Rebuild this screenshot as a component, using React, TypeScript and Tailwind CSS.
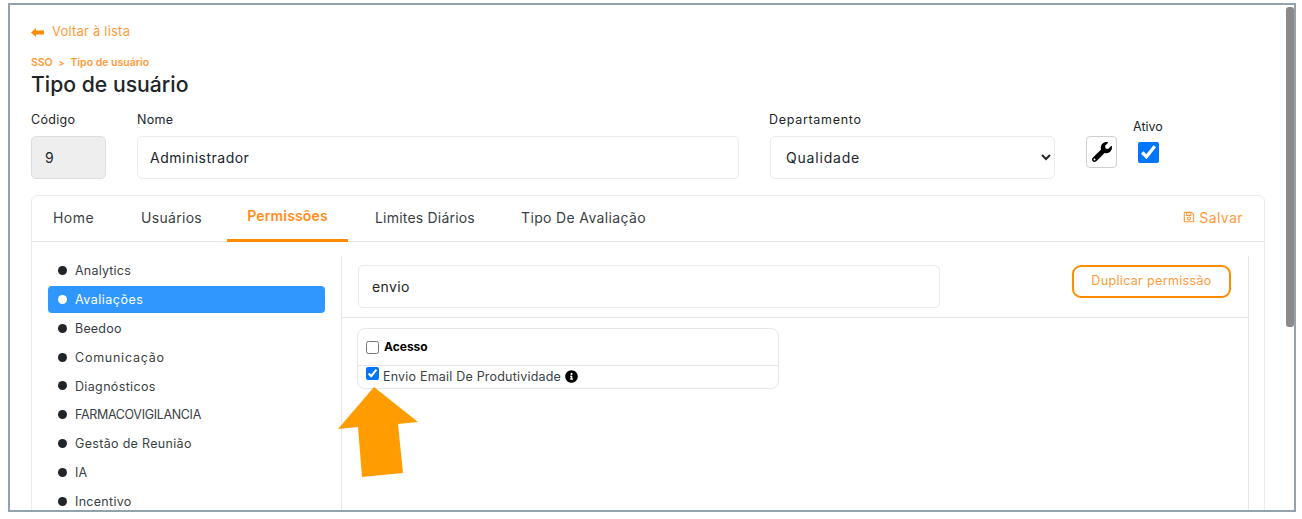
import { FaWrench, FaRegSave, FaInfoCircle } from "react-icons/fa";

const menu: [string, string][] = [
  ["Analytics", "tracking-[0.2px]"],
  ["Avaliações", "tracking-[0.5px]"],
  ["Beedoo", "tracking-[0.2px]"],
  ["Comunicação", "tracking-[0.75px]"],
  ["Diagnósticos", "tracking-[0.35px]"],
  ["FARMACOVIGILANCIA", "tracking-[-0.33px]"],
  ["Gestão de Reunião", "tracking-[0.32px]"],
  ["IA", "tracking-[0.2px]"],
  ["Incentivo", "tracking-[0.3px]"],
];
const tabs = ["Home", "Usuários", "Permissões", "Limites Diários", "Tipo De Avaliação"];

export default function App() {
  return (
    <div className="w-[1302px] h-[519px] bg-white pt-[3px] pl-[8px] overflow-hidden font-['Inter','Liberation_Sans',sans-serif] text-[#212529]">
      <div className="relative w-[1288px] h-[509px] border-2 border-[#93a3ad] overflow-hidden bg-white pl-[21px] pr-[29px]">
        <a className="flex items-center gap-[8px] h-[20px] mt-[17px] text-[13px] tracking-[0.2px] text-[#ff9a3c]">
          <svg width="13" height="9" viewBox="0 0 13 9" className="shrink-0">
            <polygon points="0,4.5 5,0 5,2.5 13,2.5 13,6.5 5,6.5 5,9" fill="#ff8c00" />
          </svg>
          <span>Voltar à lista</span>
        </a>
        <div className="flex items-center gap-[6px] mt-[14px] h-[14px] text-[10.5px] font-semibold tracking-[-0.1px] text-[#ff9a3c]">
          <span>SSO</span>
          <span className="text-[9px]">&gt;</span>
          <span className="tracking-[0px]">Tipo de usuário</span>
        </div>
        <h1 className="text-[21.2px] leading-[30px] font-medium mt-[-1px] text-[#212529]">Tipo de usuário</h1>

        <div className="flex items-start mt-[12px] h-[69px]">
          <div className="w-[75px] mr-[31px]">
            <label className="block h-[17px] leading-[17px] text-[12.5px] tracking-[0.3px]">Código</label>
            <div className="mt-[8px] h-[43px] rounded-[5px] border border-[#dedede] bg-[#eeeeee] pl-[13px] flex items-center text-[14px]">9</div>
          </div>
          <div className="w-[602px] mr-[31px]">
            <label className="block h-[17px] leading-[17px] text-[12.5px] tracking-[0.3px]">Nome</label>
            <input
              readOnly
              value="Administrador"
              className="mt-[8px] w-full h-[43px] rounded-[5px] border border-[#ebebeb] bg-white pl-[12px] text-[14px] tracking-[0.5px] outline-none"
            />
          </div>
          <div className="w-[285px] mr-[31px]">
            <label className="block h-[17px] leading-[17px] text-[12.5px] tracking-[0.7px] -ml-[1px]">Departamento</label>
            <select className="mt-[8px] w-full h-[43px] rounded-[5px] border border-[#ebebeb] bg-white pl-[11px] pr-[8px] text-[14px] tracking-[0.8px] outline-none">
              <option>Qualidade</option>
            </select>
          </div>
          <button className="mt-[25px] w-[31px] h-[32px] mr-[16px] rounded-[4px] border border-[#cfcfcf] bg-white flex items-center justify-center">
            <FaWrench className="w-[20px] h-[20px] text-black" />
          </button>
          <div className="flex flex-col items-center mt-[7px]">
            <label className="h-[17px] leading-[17px] text-[12.5px]">Ativo</label>
            <input type="checkbox" defaultChecked className="mt-[7px] ml-[2px] w-[21px] h-[21px]" />
          </div>
        </div>

        <div className="mt-[15px] w-[1234px] h-[340px] rounded-t-[6px] border border-[#ebebeb] bg-white">
          <div className="flex items-stretch h-[46px] border-b border-[#e6e6e6] pl-[1px] pr-[21px] text-[14px] tracking-[0.3px]">
            <div className="flex">
              {tabs.map((t) =>
                t === "Permissões" ? (
                  <div key={t} className="w-[121px] mr-[6px] flex items-center justify-center pb-[5px] border-b-[3px] border-[#ff8c00] font-semibold tracking-[0.15px] text-[#ff8c1a] h-[46px]">
                    {t}
                  </div>
                ) : (
                  <div
                    key={t}
                    className={`flex items-center pb-[3px] text-[#3a3f44] ${t === "Home" ? "pl-[20px] w-[87px] tracking-[0.45px]" : t === "Usuários" ? "pl-[21px] w-[107px]" : t === "Limites Diários" ? "pl-[21px] w-[146px] tracking-[0.2px]" : "pl-[21px] tracking-[0.35px]"}`}
                  >
                    {t}
                  </div>
                )
              )}
            </div>
            <div className="ml-auto flex items-center gap-[4px] pb-[3px] text-[#ff9a3c] tracking-[0.4px]">
              <FaRegSave className="w-[12px] h-[12px]" />
              <span>Salvar</span>
            </div>
          </div>

          <div className="flex pl-[16px] pt-[14px] h-[293px]">
            <ul className="w-[294px] flex flex-col pt-[1px] pr-[16px] border-r border-[#e6e6e6] text-[12.5px]">
              {menu.map(([m, tr]) => {
                const active = m === "Avaliações";
                return (
                  <li
                    key={m}
                    className={`flex items-center h-[27px] mb-[1.85px] pt-[2px] rounded-[4px] pl-[10px] shrink-0 ${tr} ${active ? "bg-[#3097ff] text-white" : "text-[#3a3f44]"}`}
                  >
                    <span className={`w-[9px] h-[9px] rounded-full mr-[8px] -mt-[2px] ${active ? "bg-white" : "bg-[#212529]"}`} />
                    {m}
                  </li>
                );
              })}
            </ul>
            <div className="w-[907px] border-r border-[#e6e6e6]">
              <div className="flex items-start justify-between h-[62px] pl-[16px] pr-[17px] pt-[9px] border-b border-[#e6e6e6]">
                <input
                  readOnly
                  value="envio"
                  className="w-[582px] h-[43px] rounded-[5px] border border-[#ebebeb] pl-[13px] text-[14px] tracking-[0.35px] outline-none"
                />
                <button className="w-[159px] h-[33px] rounded-[9px] border-2 border-[#ff8c00] text-[12.5px] tracking-[0.35px] text-[#ff9a3c]">
                  Duplicar permissão
                </button>
              </div>
              <div className="ml-[15px] mt-[10px] w-[422px] h-[61px] rounded-[8px] border border-[#e6e6e6] text-[12.5px]">
                <div className="flex items-center h-[37px] pl-[8px] border-b border-[#e6e6e6] font-bold text-black">
                  <input type="checkbox" className="w-[13px] h-[13px] mr-[5px]" />
                  <span className="text-[12px]">Acesso</span>
                </div>
                <div className="flex items-start h-[22px] pl-[8px]">
                  <input type="checkbox" defaultChecked className="w-[13px] h-[13px] mt-[1px] mr-[4px]" />
                  <span className="leading-[21px] tracking-[0.2px] text-[#3a3f44]">Envio Email De Produtividade</span>
                  <FaInfoCircle className="w-[13px] h-[13px] ml-[4px] mt-[4px] text-black" />
                </div>
              </div>
            </div>
          </div>
        </div>

        <svg className="absolute left-[328px] top-[382px]" width="90" height="96" viewBox="338 387 90 96">
          <polygon points="374,387 418,422 398,424 403,473 362,477 358,427 338,429" fill="#ff9d00" />
        </svg>

        <div className="absolute right-[0px] top-[2px] w-[8px] h-[320px] rounded-[3px] bg-[#8a8a8a]" />
      </div>
    </div>
  );
}
